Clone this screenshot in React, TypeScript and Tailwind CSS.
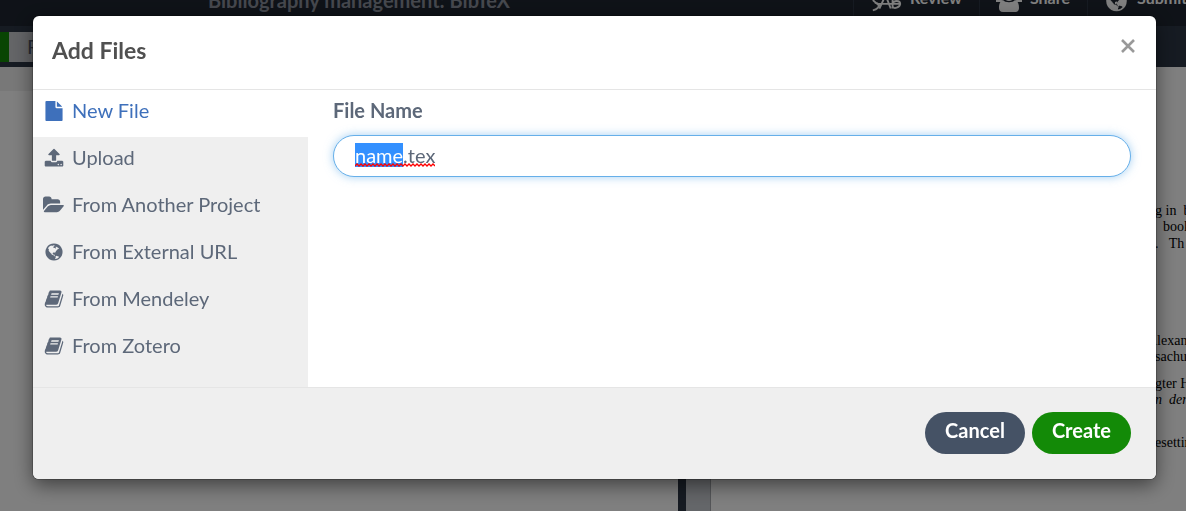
import { useEffect, useRef } from "react";
import type { ReactNode } from "react";

const FILE =
  "M1152 512v-472q22 14 36 28l408 408q14 14 28 36h-472zm-128 32q0 40 28 68t68 28h544v1056q0 40-28 68t-68 28h-1344q-40 0-68-28t-28-68v-1600q0-40 28-68t68-28h800v544z";
const UPLOAD =
  "M1344 1472q0-26-19-45t-45-19-45 19-19 45 19 45 45 19 45-19 19-45zm256 0q0-26-19-45t-45-19-45 19-19 45 19 45 45 19 45-19 19-45zm128-224v320q0 40-28 68t-68 28h-1472q-40 0-68-28t-28-68v-320q0-40 28-68t68-28h427q21 56 70.5 92t110.5 36h256q61 0 110.5-36t70.5-92h427q40 0 68 28t28 68zm-325-648q-17 40-59 40h-256v448q0 26-19 45t-45 19h-256q-26 0-45-19t-19-45v-448h-256q-42 0-59-40-17-39 14-69l448-448q18-19 45-19t45 19l448 448q31 30 14 69z";
const FOLDER =
  "M1879 952q0 31-31 66l-336 396q-43 51-120.5 86.5t-143.5 35.5h-1088q-34 0-60.5-13t-26.5-43q0-31 31-66l336-396q43-51 120.5-86.5t143.5-35.5h1088q34 0 60.5 13t26.5 43zm-343-344v160h-832q-94 0-197 47.5t-164 119.5l-337 396-5 6q0-4-.5-12.5t-.5-12.5v-960q0-92 66-158t158-66h320q92 0 158 66t66 158v32h544q92 0 158 66t66 158z";
const GLOBE =
  "M896 128q209 0 385.5 103t279.5 279.5 103 385.5-103 385.5-279.5 279.5-385.5 103-385.5-103-279.5-279.5-103-385.5 103-385.5 279.5-279.5 385.5-103zm274 521q-2 1-9.5 9.5t-13.5 9.5q2 0 4.5-5t5-11 3.5-7q6-7 22-15 14-6 52-12 34-8 51 11-2-2 9.5-13t14.5-12q3-2 15-4.5t15-7.5l2-22q-12 1-17.5-7t-6.5-21q0 2-6 8 0-7-4.5-8t-11.5 1-9 1q-10-3-15-7.5t-8-16.5-4-15q-2-5-9.5-11t-9.5-10q-1-2-2.5-5.5t-3-6.5-4-5.5-5.5-2.5-7 5-7.5 10-4.5 5q-3-2-6-1.5t-4.5 1-4.5 3-5 3.5q-3 2-8.5 3t-8.5 2q15-5-1-11-10-4-16-3 9-4 7.5-12t-8.5-14h5q-1-4-8.5-8.5t-17.5-8.5-13-6q-8-5-34-9.5t-33-.5q-5 6-4.5 10.5t4 14 3.5 12.5q1 6-5.5 13t-6.5 12q0 7 14 15.5t10 21.5q-3 8-16 16t-16 12q-5 8-1.5 18.5t10.5 16.5q2 2 1.5 4t-3.5 4.5-5.5 4-6.5 3.5l-3 2q-11 5-20.5-6t-13.5-26q-7-25-16-30-23-8-29 1-5-13-41-26-25-9-58-4 6-1 0-15-7-15-19-12 3-6 4-17.5t1-13.5q3-13 12-23 1-1 7-8.5t9.5-13.5.5-6q35 4 50-11 5-5 11.5-17t10.5-17q9-6 14-5.5t14.5 5.5 14.5 5q14 1 15.5-11t-7.5-20q12 1 3-17-4-7-8-9-12-4-27 5-8 4 2 8-1-1-9.5 10.5t-16.5 17.5-16-5q-1-1-5.5-13.5t-9.5-13.5q-8 0-16 15 3-8-11-15t-24-8q19-12-8-27-7-4-20.5-5t-19.5 4q-5 7-5.5 11.5t5 8 10.5 5.5 11.5 4 8.5 3q14 10 8 14-2 1-8.5 3.5t-11.5 4.5-6 4q-3 4 0 14t-2 14q-5-5-9-17.5t-7-16.5q7 9-25 6l-10-1q-4 0-16 2t-20.5 1-13.5-8q-4-8 0-20 1-4 4-2-4-3-11-9.5t-10-8.5q-46 15-94 41 6 1 12-1 5-2 13-6.5t10-5.5q34-14 42-7l5-5q14 16 20 25-7-4-30-1-20 6-22 12 7 12 5 18-4-3-11.5-10t-14.5-11-15-5q-16 0-22 1-146 80-235 222 7 7 12 8 4 1 5 9t2.5 11 11.5-3q9 8 3 19 1-1 44 27 19 17 21 21 3 11-10 18-1-2-9-9t-9-4q-3 5 .5 18.5t10.5 12.5q-7 0-9.5 16t-2.5 35.5-1 23.5l2 1q-3 12 5.5 34.5t21.5 19.5q-13 3 20 43 6 8 8 9 3 2 12 7.5t15 10 10 10.5q4 5 10 22.5t14 23.5q-2 6 9.5 20t10.5 23q-1 0-2.5 1t-2.5 1q3 7 15.5 14t15.5 13q1 3 2 10t3 11 8 2q2-20-24-62-15-25-17-29-3-5-5.5-15.5t-4.5-14.5q2 0 6 1.5t8.5 3.5 7.5 4 2 3q-3 7 2 17.5t12 18.5 17 19 12 13q6 6 14 19.5t0 13.5q9 0 20 10.5t17 19.5q5 8 8 26t5 24q2 7 8.5 13.5t12.5 9.5l16 8 13 7q5 2 18.5 10.5t21.5 11.5q10 4 16 4t14.5-2.5 13.5-3.5q15-2 29 15t21 21q36 19 55 11-2 1 .5 7.5t8 15.5 9 14.5 5.5 8.5q5 6 18 15t18 15q6-4 7-9-3 8 7 20t18 10q14-3 14-32-31 15-49-18 0-1-2.5-5.5t-4-8.5-2.5-8.5 0-7.5 5-3q9 0 10-3.5t-2-12.5-4-13q-1-8-11-20t-12-15q-5 9-16 8t-16-9q0 1-1.5 5.5t-1.5 6.5q-13 0-15-1 1-3 2.5-17.5t3.5-22.5q1-4 5.5-12t7.5-14.5 4-12.5-4.5-9.5-17.5-2.5q-19 1-26 20-1 3-3 10.5t-5 11.5-9 7q-7 3-24 2t-24-5q-13-8-22.5-29t-9.5-37q0-10 2.5-26.5t3-25-5.5-24.5q3-2 9-9.5t10-10.5q2-1 4.5-1.5t4.5 0 4-1.5 3-6q-1-1-4-3-3-3-4-3 7 3 28.5-1.5t27.5 1.5q15 11 22-2 0-1-2.5-9.5t-.5-13.5q5 27 29 9 3 3 15.5 5t17.5 5q3 2 7 5.5t5.5 4.5 5-.5 8.5-6.5q10 14 12 24 11 40 19 44 7 3 11 2t4.5-9.5 0-14-1.5-12.5l-1-8v-18l-1-8q-15-3-18.5-12t1.5-18.5 15-18.5q1-1 8-3.5t15.5-6.5 12.5-8q21-19 15-35 7 0 11-9-1 0-5-3t-7.5-5-4.5-2q9-5 2-16 5-3 7.5-11t7.5-10q9 12 21 2 8-8 1-16 5-7 20.5-10.5t18.5-9.5q7 2 8-2t1-12 3-12q4-5 15-9t13-5l17-11q3-4 0-4 18 2 31-11 10-11-6-20 3-6-3-9.5t-15-5.5q3-1 11.5-.5t10.5-1.5q15-10-7-16-17-5-43 12zm-163 877q206-36 351-189-3-3-12.5-4.5t-12.5-3.5q-18-7-24-8 1-7-2.5-13t-8-9-12.5-8-11-7q-2-2-7-6t-7-5.5-7.5-4.5-8.5-2-10 1l-3 1q-3 1-5.5 2.5t-5.5 3-4 3 0 2.5q-21-17-36-22-5-1-11-5.5t-10.5-7-10-1.5-11.5 7q-5 5-6 15t-2 13q-7-5 0-17.5t2-18.5q-3-6-10.5-4.5t-12 4.5-11.5 8.5-9 6.5-8.5 5.5-8.5 7.5q-3 4-6 12t-5 11q-2-4-11.5-6.5t-9.5-5.5q2 10 4 35t5 38q7 31-12 48-27 25-29 40-4 22 12 26 0 7-8 20.5t-7 21.5q0 6 2 16z";
const BOOK =
  "M1703 478q40 57 18 129l-275 906q-19 64-76.5 107.5t-122.5 43.5h-923q-77 0-148.5-53.5t-99.5-131.5q-24-67-2-127 0-4 3-27t4-37q1-8-3-21.5t-3-19.5q2-11 8-21t16.5-23.5 16.5-23.5q23-38 45-91.5t30-91.5q3-10 .5-30t-.5-28q3-11 17-28t17-23q21-36 42-92t25-90q1-9-2.5-32t.5-28q4-13 22-30.5t22-22.5q19-26 42.5-84.5t27.5-96.5q1-8-3-25.5t-2-26.5q2-8 9-18t18-23 17-21q8-12 16.5-30.5t15-35 16-36 19.5-32 26.5-23.5 36-11.5 47.5 5.5l-1 3q38-9 51-9h761q74 0 114 56t18 130l-274 906q-36 119-71.5 153.5t-128.5 34.5h-869q-27 0-38 15-11 16-1 43 24 70 144 70h923q29 0 56-15.5t35-41.5l300-987q7-22 5-57 38 15 59 43zm-1064 2q-4 13 2 22.5t20 9.5h608q13 0 25.5-9.5t16.5-22.5l21-64q4-13-2-22.5t-20-9.5h-608q-13 0-25.5 9.5t-16.5 22.5zm-83 256q-4 13 2 22.5t20 9.5h608q13 0 25.5-9.5t16.5-22.5l21-64q4-13-2-22.5t-20-9.5h-608q-13 0-25.5 9.5t-16.5 22.5z";

const SOURCES = [
  { label: "New File", path: FILE, box: "0 0 1792 1792" },
  { label: "Upload", path: UPLOAD, box: "0 0 1792 1792" },
  { label: "From Another Project", path: FOLDER, box: "0 0 1920 1792" },
  { label: "From External URL", path: GLOBE, box: "0 0 1792 1792" },
  { label: "From Mendeley", path: BOOK, box: "0 0 1792 1792" },
  { label: "From Zotero", path: BOOK, box: "0 0 1792 1792" },
];

function HeaderButton({ icon, children }: { icon: ReactNode; children: ReactNode }) {
  return (
    <button className="flex h-full items-center gap-2 border-l border-[#2c3645] pr-[17px] pl-4 text-base font-bold text-white">
      {icon}
      <span className="pb-1.5">{children}</span>
    </button>
  );
}

function ReviewIcon() {
  return (
    <svg viewBox="0 0 34 28" className="h-7 w-8" fill="none" stroke="currentColor" strokeWidth="2">
      <path d="M4 12C1 7 6 2 14 2h8c5 0 8 3 9 7M3 13c3 3 5 4 6 5 1 2-1 5-6 6M5 16c3 0 5 1 5 4" />
      <path d="M10 22l6-13h1l5 13M9 17h24M24 8v14M24 17c1-4 8-4 8 0s-7 6-8 3" />
    </svg>
  );
}

function GroupIcon() {
  return (
    <svg viewBox="0 0 26 28" className="h-7 w-[26px]" fill="currentColor">
      <circle cx="13" cy="8" r="6" />
      <circle cx="4" cy="7" r="3" />
      <circle cx="22" cy="7" r="3" />
      <path d="M0 12h5l2 3H0zM26 12h-5l-2 3h7z" />
      <path d="M7 13c2 3 10 3 12 0 3 1 4 4 4 8 0 2-1 4-4 4H7c-3 0-4-2-4-4 0-4 1-7 4-8z" />
    </svg>
  );
}

function Editor() {
  return (
    <div className="flex h-screen flex-col overflow-hidden bg-[#2c3645]">
      <header className="-mt-6 flex h-[50px] shrink-0 items-center bg-[#1e2530]">
        <span className="flex-1 pb-[3px] pl-[208px] text-xl font-bold text-[#8b909c]">
          Bibliography management: BibTeX
        </span>
        <HeaderButton icon={<ReviewIcon />}>Review</HeaderButton>
        <HeaderButton icon={<GroupIcon />}>Share</HeaderButton>
        <div className="h-full w-[99px] overflow-hidden whitespace-nowrap">
          <HeaderButton
            icon={
              <svg viewBox="0 0 1792 1792" className="size-[25px] shrink-0 pb-px" fill="currentColor">
                <path d={GLOBE} />
              </svg>
            }
          >
            Submit
          </HeaderButton>
        </div>
      </header>
      <div className="flex h-[41px] shrink-0 items-center pt-px">
        <span className="h-[30px] w-[9px] bg-[#138a07]" />
        <span className="h-[30px] bg-[#c8cacf] px-[18px] text-xl text-[#505768]">R</span>
      </div>
      <div className="grid min-h-0 flex-1 grid-cols-[678fr_8px_25px_475fr]">
        <div className="bg-white">
          <div className="h-6 bg-[#f0f0f0]" />
        </div>
        <div className="bg-[#2c3645]" />
        <div className="border-r border-[#a8abb0] bg-[#c9ccd2]" />
        <div className="flex justify-end overflow-hidden bg-white pt-[136px] font-['Liberation_Serif',serif] text-sm leading-4 whitespace-pre text-black">
          <div className="w-[31px]">
            <p>{"g in  b"}</p>
            <p className="pl-2">book</p>
            <p className="pt-px">{".   Th"}</p>
            <p className="-ml-2 pt-[81px]">Alexan</p>
            <p>sachu</p>
            <p className="pt-[11px]">gter H</p>
            <p className="italic">{"n  den"}</p>
            <p className="pt-[27px]">esettin</p>
          </div>
        </div>
      </div>
    </div>
  );
}

export default function App() {
  const input = useRef<HTMLInputElement>(null);

  useEffect(() => {
    input.current?.focus();
    input.current?.setSelectionRange(0, 4);
  }, []);

  return (
    <div className="font-[Lato,sans-serif]">
      <Editor />
      <div className="fixed inset-0 overflow-hidden bg-black/50 pt-4 pr-[30px] pl-[33px]">
        <div
          role="dialog"
          aria-labelledby="dialog-title"
          className="overflow-hidden rounded-md bg-white text-xl leading-6 text-[#5d6879] shadow-[0_0_0_1px_rgba(0,0,0,0.2),0_6px_19px_rgba(0,0,0,0.5)]"
        >
          <div className="flex items-start justify-between border-b border-[#e5e5e5] px-5 pt-[18px] pb-[23px]">
            <h3 id="dialog-title" className="-ml-px text-[23px] leading-8 font-bold text-[#505050]">
              Add Files
            </h3>
            <button aria-label="Close" className="flex h-6 items-center pr-px text-[#999999]">
              <svg viewBox="0 0 14 14" className="size-[14px]" stroke="currentColor" strokeWidth="2.6">
                <path d="M1 1l12 12M13 1L1 13" />
              </svg>
            </button>
          </div>
          <div className="flex">
            <ul className="w-[275px] shrink-0 bg-[#efefef] pb-[15px]">
              {SOURCES.map((source, i) => (
                <li key={source.label}>
                  <button
                    className={
                      i === 0
                        ? "flex h-[47px] w-full items-center gap-[5px] bg-white pb-[5px] pl-2 text-left text-[#3e70bb]"
                        : "flex h-[47px] w-full items-center gap-[5px] pb-[5px] pl-2 text-left"
                    }
                  >
                    <span className="flex w-[26px] shrink-0 justify-center">
                      <svg viewBox={source.box} className="h-5" fill="currentColor">
                        <path d={source.path} />
                      </svg>
                    </span>
                    <span className="pb-0.5">{source.label}</span>
                  </button>
                </li>
              ))}
            </ul>
            <div className="flex-1 px-[25px] pt-2">
              <label htmlFor="file-name" className="block font-bold">
                File Name
              </label>
              <div className="relative mt-[13px]">
                <input
                  id="file-name"
                  ref={input}
                  type="text"
                  defaultValue="name.tex"
                  className="block h-[42px] w-full rounded-full border border-[#66afe9] bg-white px-[21px] pb-0.5 shadow-[0_0_10px_rgba(102,175,233,0.6)] outline-none selection:bg-[#3390ff] selection:text-white"
                />
                <svg
                  viewBox="0 0 80 4"
                  className="pointer-events-none absolute top-7 left-[22px] h-1 w-20"
                  fill="none"
                  stroke="#f00"
                  strokeWidth="1.3"
                >
                  <path d="M0 3l2-2 2 2 2-2 2 2 2-2 2 2 2-2 2 2 2-2 2 2 2-2 2 2 2-2 2 2 2-2 2 2 2-2 2 2 2-2 2 2 2-2 2 2 2-2 2 2 2-2 2 2 2-2 2 2 2-2 2 2 2-2 2 2 2-2 2 2 2-2 2 2 2-2 2 2 2-2 2 2" />
                </svg>
              </div>
            </div>
          </div>
          <div className="flex justify-end gap-[7px] border-t border-[#e5e5e5] bg-[#efefef] px-[25px] pt-6 pb-[25px] font-bold text-white">
            <button className="h-[42px] rounded-full bg-[#455265] px-5 pb-1.5">Cancel</button>
            <button className="h-[42px] rounded-full bg-[#138a07] px-5 pb-1.5">Create</button>
          </div>
        </div>
      </div>
    </div>
  );
}
